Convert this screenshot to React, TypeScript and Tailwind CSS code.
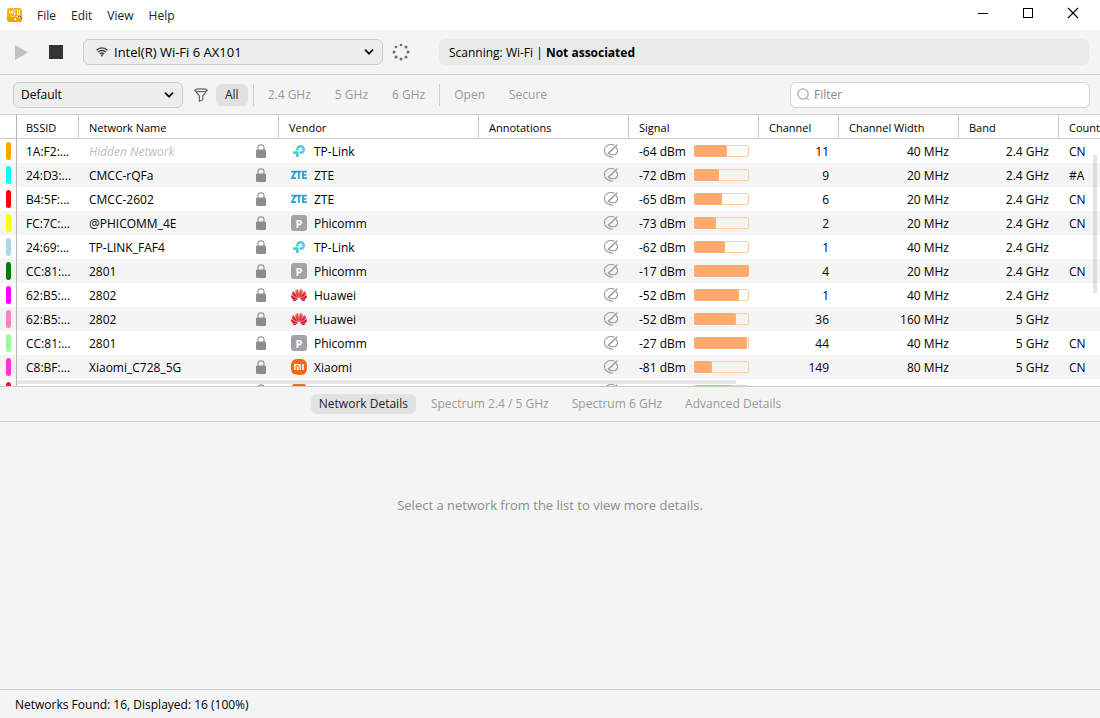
import { FunctionComponent, ReactNode } from "react";
import { SiHuawei, SiTplink, SiXiaomi } from "react-icons/si";

interface Network {
  color: string;
  bssid: string;
  name: string;
  vendor: string;
  signal: number;
  level: number;
  channel: number;
  width: number;
  band: string;
  country: string;
}

const networks: Network[] = [
  { color: "#ffa500", bssid: "1A:F2:...", name: "", vendor: "TP-Link", signal: -64, level: 60, channel: 11, width: 40, band: "2.4", country: "CN" },
  { color: "#00ffff", bssid: "24:D3:...", name: "CMCC-rQFa", vendor: "ZTE", signal: -72, level: 45, channel: 9, width: 20, band: "2.4", country: "#A" },
  { color: "#ff0000", bssid: "B4:5F:...", name: "CMCC-2602", vendor: "ZTE", signal: -65, level: 51, channel: 6, width: 20, band: "2.4", country: "CN" },
  { color: "#ffff00", bssid: "FC:7C:...", name: "@PHICOMM_4E", vendor: "Phicomm", signal: -73, level: 40, channel: 2, width: 20, band: "2.4", country: "CN" },
  { color: "#add8e6", bssid: "24:69:...", name: "TP-LINK_FAF4", vendor: "TP-Link", signal: -62, level: 56, channel: 1, width: 40, band: "2.4", country: "" },
  { color: "#008000", bssid: "CC:81:...", name: "2801", vendor: "Phicomm", signal: -17, level: 100, channel: 4, width: 20, band: "2.4", country: "CN" },
  { color: "#ff00ff", bssid: "62:B5:...", name: "2802", vendor: "Huawei", signal: -52, level: 82, channel: 1, width: 40, band: "2.4", country: "" },
  { color: "#ff80c0", bssid: "62:B5:...", name: "2802", vendor: "Huawei", signal: -52, level: 76, channel: 36, width: 160, band: "5", country: "" },
  { color: "#98ff98", bssid: "CC:81:...", name: "2801", vendor: "Phicomm", signal: -27, level: 96, channel: 44, width: 40, band: "5", country: "CN" },
  { color: "#ff33dd", bssid: "C8:BF:...", name: "Xiaomi_C728_5G", vendor: "Xiaomi", signal: -81, level: 33, channel: 149, width: 80, band: "5", country: "CN" },
];

const headers = ["BSSID", "Network Name", "Vendor", "Annotations", "Signal", "Channel", "Channel Width", "Band", "Country"];

const AppLogo = () => (
  <svg width="16" height="16" viewBox="0 0 16 16" aria-hidden="true">
    <rect x="0" y="1" width="15" height="14" rx="3" fill="#f9b50b" />
    <path d="M0 10h15v2a3 3 0 0 1-3 3H3a3 3 0 0 1-3-3z" fill="#f5a300" />
    <g fill="none" stroke="#fff" strokeWidth="1">
      <path d="M2.5 3.500v2l1 1 1-2 1 2V3.500M7 3.500h1M7.500 5v3M10.500 3.500h2v4h-2zM5.500 9v1M9.500 9.500h2M7 12.500h1.500M8.500 11v1.500M12 10.500h1" />
    </g>
    <path d="M11 9.500h1M13 9.500h1M14 11h1.500" stroke="#5b4a20" />
  </svg>
);

const WifiIcon = () => (
  <svg width="12" height="12" viewBox="0 0 12 12" fill="none" stroke="#3a3a3a" strokeWidth="1.400" aria-hidden="true">
    <path d="M0.600 4.200C3.600 1.100 8.400 1.100 11.400 4.200" />
    <path d="M2.300 6.200C4.300 4 7.700 4 9.700 6.200" />
    <path d="M4 8.100C5.100 6.900 6.900 6.900 8 8.100" />
    <circle cx="6" cy="9.500" r="0.900" fill="#3a3a3a" stroke="none" />
  </svg>
);

const Chevron = () => (
  <svg className="pointer-events-none absolute right-[9px] top-1/2 -translate-y-1/2" width="10" height="8" viewBox="0 0 10 8" fill="none" stroke="#111" strokeWidth="1.800" aria-hidden="true">
    <path d="M1 1.700l4 4 4-4" />
  </svg>
);

const Spinner = () => (
  <svg width="18" height="18" viewBox="0 0 18 18" fill="#6b6b6b" aria-hidden="true">
    <circle cx="9" cy="2" r="1.300" />
    <circle cx="14" cy="4" r="1.500" />
    <circle cx="16" cy="9" r="1.500" />
    <circle cx="14" cy="14" r="1.500" />
    <circle cx="9" cy="16" r="1.500" />
    <circle cx="4" cy="14" r="1.500" />
    <circle cx="2" cy="9" r="1.500" />
    <circle cx="4" cy="4" r="1.300" />
  </svg>
);

const FunnelIcon = () => (
  <svg width="14" height="14" viewBox="0 0 14 14" fill="none" stroke="#666" strokeWidth="1.200" strokeLinejoin="round" aria-hidden="true">
    <path d="M0.700 2.200C0.700 0.300 13.300 0.300 13.300 2.200L8.800 7.800V11.800L5.400 13.300V7.800z" />
    <path d="M0.900 2.600C2.500 4 11.500 4 13.100 2.600" />
  </svg>
);

const LockIcon = () => (
  <svg width="10" height="14" viewBox="0 0 10 14" aria-hidden="true">
    <path d="M2 7V3.700C2 -0.100 8 -0.100 8 3.700V7" fill="none" stroke="#999" strokeWidth="1.200" />
    <rect x="0" y="5.500" width="10" height="8.500" rx="1.200" fill="#8c8c8c" />
  </svg>
);

const NoteIcon = () => (
  <svg width="14" height="14" viewBox="0 0 14 14" fill="none" stroke="#999" strokeWidth="1.100" aria-hidden="true">
    <path d="M10.500 1.200C6 -0.600 0.500 1.600 0.500 6.200C0.500 10.500 4.500 12.800 9.200 13.300" />
    <path d="M9 10.800C11.800 10.800 13.500 9.300 13.500 6.800C13.500 5.200 12.600 3.800 11.800 3.200M9 10.800C6.500 10.800 4.600 10.300 4.600 9L5.200 7.800" />
    <path d="M5 8.800L13.200 0.800" strokeWidth="1.600" />
  </svg>
);

const VendorIcon = ({ vendor }: { vendor: string }) => {
  if (vendor === "TP-Link") return <SiTplink size={12} color="#4acbd6" />;
  if (vendor === "Huawei")
    return (
      <svg className="size-4" viewBox="0 0 16 16" aria-hidden="true">
        <defs>
          <linearGradient id="petal" x1="0" y1="0" x2="0" y2="1">
            <stop offset="0" stopColor="#f08a72" />
            <stop offset="0.500" stopColor="#e0202b" />
            <stop offset="1" stopColor="#c8102e" />
          </linearGradient>
        </defs>
        <SiHuawei size={16} style={{ fill: "url(#petal)", stroke: "url(#petal)", strokeWidth: 0.3 }} />
      </svg>
    );
  if (vendor === "Xiaomi")
    return (
      <span className="flex size-4 rounded-[5px] bg-white">
        <SiXiaomi size={16} color="#f0681a" />
      </span>
    );
  if (vendor === "ZTE")
    return (
      <svg width="16" height="10" viewBox="0 0 16 10" fill="none" stroke="#2b9bd8" strokeWidth="1.700" aria-hidden="true">
        <path d="M0.200 1.700H4.600L0.700 8.200H5M5.200 1.700H10.600M7.900 1.700V9M15.900 1.700H12V8.200H15.900M12 5H15.500" />
      </svg>
    );
  return (
    <span className="flex size-4 items-center justify-center rounded-[3px] bg-[#a3a1a7] text-[11px] font-bold leading-none text-white">
      P
    </span>
  );
};

const FilterButton = ({ active, children }: { active?: boolean; children: ReactNode }) => (
  <button
    type="button"
    aria-pressed={!!active}
    className={active ? "h-[22px] rounded-md bg-[#e0e0e0] px-[9px] pt-px text-[#222]" : "h-[22px] rounded-md px-[9px] pt-px text-[#999]"}
  >
    {children}
  </button>
);

const TitleBar = () => (
  <header className="flex h-[30px] shrink-0 items-center bg-white pl-[7px] pr-[21px]">
    <AppLogo />
    <nav className="ml-[7px] flex gap-px pt-[2px] text-[12px] text-[#222]">
      <button type="button" className="px-[7px]">File</button>
      <button type="button" className="px-[7px]">Edit</button>
      <button type="button" className="px-[7px]">View</button>
      <button type="button" className="px-[7px]">Help</button>
    </nav>
    <div className="ml-auto flex items-center gap-[33px] pb-1">
      <button type="button" aria-label="Minimize">
        <svg width="12" height="12" viewBox="0 0 12 12" stroke="#000" shapeRendering="crispEdges"><path d="M1 6.500h10" /></svg>
      </button>
      <button type="button" aria-label="Maximize">
        <svg width="12" height="12" viewBox="0 0 12 12" fill="none" stroke="#000" shapeRendering="crispEdges"><rect x="1.500" y="1.500" width="9" height="9" /></svg>
      </button>
      <button type="button" aria-label="Close">
        <svg width="12" height="12" viewBox="0 0 12 12" stroke="#000" strokeWidth="1.100"><path d="M1 1l10 10M11 1L1 11" /></svg>
      </button>
    </div>
  </header>
);

const Toolbar = () => (
  <div className="flex h-[45px] shrink-0 items-center border-b border-[#ccc] pl-[15px] pr-[11px]">
    <button type="button" aria-label="Start">
      <svg width="13" height="15" viewBox="0 0 13 15" fill="#c1c1c1"><path d="M0 0l13 7.500L0 15z" /></svg>
    </button>
    <button type="button" aria-label="Stop" className="ml-[21px] size-[14px] bg-[#333]" />
    <div className="relative ml-5 w-[300px]">
      <span className="pointer-events-none absolute left-[13px] top-1/2 -translate-y-1/2">
        <WifiIcon />
      </span>
      <select aria-label="Adapter" className="h-[26px] w-full appearance-none rounded-md border border-[#ccc] bg-[#ededed] pl-[30px] pr-6 text-[13px]">
        <option>Intel(R) Wi-Fi 6 AX101</option>
      </select>
      <Chevron />
    </div>
    <div className="ml-[9px]">
      <Spinner />
    </div>
    <div className="ml-[29px] flex h-[26px] flex-1 items-center whitespace-pre rounded-md bg-[#eaeaea] px-[10px] pt-[2px] text-[12px]">
      Scanning: Wi-Fi | <b>Not associated</b>
    </div>
  </div>
);

const FilterBar = () => (
  <div className="flex h-10 shrink-0 items-center border-b border-[#ccc] pl-[13px] pr-[10px] text-[12px]">
    <div className="relative w-[170px]">
      <select aria-label="Profile" className="h-[26px] w-full appearance-none rounded-md border border-[#ccc] bg-[#ededed] pl-[7px] pr-6">
        <option>Default</option>
      </select>
      <Chevron />
    </div>
    <span className="ml-[11px]">
      <FunnelIcon />
    </span>
    <div className="ml-2 flex items-center">
      <FilterButton active>All</FilterButton>
      <span className="mx-[5px] h-[22px] w-px bg-[#ccc]" />
      <div className="flex gap-[6px]">
        <FilterButton>2.4 GHz</FilterButton>
        <FilterButton>5 GHz</FilterButton>
        <FilterButton>6 GHz</FilterButton>
      </div>
      <span className="mx-[5px] h-[22px] w-px bg-[#ccc]" />
      <div className="flex gap-[6px]">
        <FilterButton>Open</FilterButton>
        <FilterButton>Secure</FilterButton>
      </div>
    </div>
    <label className="ml-auto flex h-[26px] w-[300px] items-center gap-1 rounded-md border border-[#d4d4d4] bg-white px-[6px]">
      <svg width="13" height="13" viewBox="0 0 13 13" fill="none" stroke="#aaa" strokeWidth="1.200" aria-hidden="true">
        <circle cx="6" cy="6" r="5.200" />
        <path d="M9.300 9.600l2.500 2.500" />
      </svg>
      <input type="text" aria-label="Filter" placeholder="Filter" className="min-w-0 flex-1 outline-none placeholder:text-[#888]" />
    </label>
  </div>
);

const SignalBar = ({ level }: { level: number }) => (
  <div className="relative h-3 w-[55px] rounded-[2px] border border-[#fbcfa0]">
    <div className="absolute -inset-y-px -left-px rounded-[2px] bg-[#ffab70]" style={{ width: `${Math.round(level * 0.55)}px` }} />
  </div>
);

const NetworkRow = ({ item }: { item: Network }) => (
  <tr className="h-6 even:bg-[#f4f4f4]">
    <td className="border-r border-[#b4b4b4]">
      <span className="ml-[6px] block h-[18px] w-[5px] rounded-full" style={{ background: item.color }} />
    </td>
    <td className="pl-[9px] pt-[2px]">{item.bssid}</td>
    <td className="pl-[10px] pr-[13px]">
      <div className="flex items-center justify-between">
        {item.name ? <span className="pt-[2px]">{item.name}</span> : <i className="pt-[2px] text-[#c0c0c0]">Hidden Network</i>}
        <LockIcon />
      </div>
    </td>
    <td className="pl-3">
      <div className="flex items-center gap-[7px]">
        <span className="flex w-4 justify-center">
          <VendorIcon vendor={item.vendor} />
        </span>
        <span className="pt-[2px]">{item.vendor}</span>
      </div>
    </td>
    <td className="pr-[11px]">
      <div className="flex justify-end">
        <NoteIcon />
      </div>
    </td>
    <td className="pl-[10px] pr-[10px]">
      <div className="flex items-center justify-between">
        <span className="pt-[2px]">{item.signal} dBm</span>
        <SignalBar level={item.level} />
      </div>
    </td>
    <td className="pr-[10px] pt-[2px] text-right">{item.channel}</td>
    <td className="pr-[10px] pt-[2px] text-right">{item.width} MHz</td>
    <td className="pr-[10px] pt-[2px] text-right">{item.band} GHz</td>
    <td className="pl-[10px] pt-[2px]">{item.country}</td>
  </tr>
);

// next row peeking out under the scrollbar, icons only
const PeekRow = () => (
  <tr className="h-6">
    <td className="border-r border-[#b4b4b4]">
      <span className="ml-[6px] block h-[18px] w-[5px] rounded-full bg-[#ff1030]" />
    </td>
    <td />
    <td className="pr-[13px]">
      <div className="flex justify-end">
        <LockIcon />
      </div>
    </td>
    <td className="pl-3">
      <VendorIcon vendor="Xiaomi" />
    </td>
    <td className="pr-[11px]">
      <div className="flex justify-end">
        <NoteIcon />
      </div>
    </td>
    <td className="pr-[10px]">
      <div className="flex justify-end">
        <SignalBar level={69} />
      </div>
    </td>
    <td colSpan={4} />
  </tr>
);

const NetworkTable = () => (
  <section className="relative min-h-0 flex-[271] overflow-hidden bg-white">
    <table className="w-full min-w-[1100px] table-fixed border-separate border-spacing-0 text-[12px] leading-4">
      <colgroup>
        <col className="w-[17px]" />
        <col className="w-[62px]" />
        <col className="w-[200px]" />
        <col className="w-[200px]" />
        <col className="w-[150px]" />
        <col className="w-[130px]" />
        <col className="w-[80px]" />
        <col className="w-[120px]" />
        <col className="w-[100px]" />
        <col />
      </colgroup>
      <thead>
        <tr className="h-6 text-left text-[11px]">
          <td className="border-b border-r border-b-[#ccc] border-r-[#b4b4b4]" />
          {headers.map((header) => (
            <th key={header} className="overflow-hidden whitespace-nowrap border-b border-r border-[#ccc] pl-[10px] pt-[2px] font-normal first-of-type:pl-[9px] last:border-r-0">
              {header}
            </th>
          ))}
        </tr>
      </thead>
      <tbody>
        {networks.map((item, index) => (
          <NetworkRow key={index} item={item} />
        ))}
        <PeekRow />
      </tbody>
    </table>
    <div className="absolute bottom-[2px] left-[17px] h-1 w-[719px] bg-[#e6e6e6]" />
    <div className="absolute right-[3px] top-10 h-[138px] w-1 bg-black/10" />
  </section>
);

const tabs = ["Network Details", "Spectrum 2.4 / 5 GHz", "Spectrum 6 GHz", "Advanced Details"];

const DetailTabs = () => (
  <div role="tablist" className="flex h-9 shrink-0 items-center justify-center gap-[7px] border-y border-[#ccc] text-[12px]">
    {tabs.map((tab, index) => (
      <button
        key={tab}
        type="button"
        role="tab"
        aria-selected={index === 0}
        className={index === 0 ? "h-5 rounded-md bg-[#e2e2e2] px-2 text-[#222]" : "h-5 rounded-md px-2 text-[#999]"}
      >
        {tab}
      </button>
    ))}
  </div>
);

const App: FunctionComponent = () => {
  return (
    <div className="flex h-screen flex-col bg-[#f4f4f4] font-['Open_Sans','Noto_Sans',sans-serif] text-black">
      <TitleBar />
      <Toolbar />
      <FilterBar />
      <NetworkTable />
      <DetailTabs />
      <main className="min-h-0 flex-[267]">
        <p className="pt-[73px] text-center text-[13px] leading-5 text-[#8c8c8c]">
          Select a network from the list to view more details.
        </p>
      </main>
      <footer className="flex h-[29px] shrink-0 items-center border-t border-[#ccc] px-[15px] pt-[2px] text-[12px]">
        Networks Found: 16, Displayed: 16 (100%)
      </footer>
    </div>
  );
};

export default App;
